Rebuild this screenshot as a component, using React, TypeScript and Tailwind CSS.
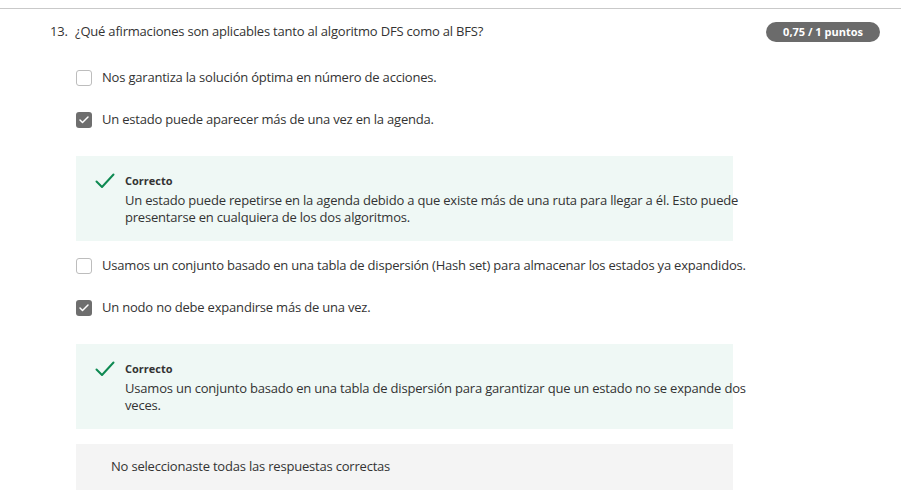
import { Check } from 'lucide-react';

type Option = {
  text: string;
  checked: boolean;
  feedback?: string;
};

const options: Option[] = [
  { text: 'Nos garantiza la solución óptima en número de acciones.', checked: false },
  {
    text: 'Un estado puede aparecer más de una vez en la agenda.',
    checked: true,
    feedback:
      'Un estado puede repetirse en la agenda debido a que existe más de una ruta para llegar a él. Esto puede presentarse en cualquiera de los dos algoritmos.',
  },
  {
    text: 'Usamos un conjunto basado en una tabla de dispersión (Hash set) para almacenar los estados ya expandidos.',
    checked: false,
  },
  {
    text: 'Un nodo no debe expandirse más de una vez.',
    checked: true,
    feedback:
      'Usamos un conjunto basado en una tabla de dispersión para garantizar que un estado no se expande dos veces.',
  },
];

function Checkbox({ checked }: { checked: boolean }) {
  if (checked) {
    return (
      <span className="flex h-4 w-4 shrink-0 items-center justify-center rounded-[3px] bg-[#6e6e6e]">
        <Check className="h-3 w-3 text-white" strokeWidth={3} />
      </span>
    );
  }
  return <span className="h-4 w-4 shrink-0 rounded-[3px] border border-[#bdbdbd] bg-white" />;
}

function Feedback({ text }: { text: string }) {
  return (
    <div className="mt-[15px] mb-[4px] flex h-[85px] w-[657px] gap-[10px] bg-[#eff8f5] pt-[17px] pl-[19px]">
      <svg viewBox="0 0 20 16" className="h-[16px] w-[20px] shrink-0" fill="none">
        <path d="M1.5 8.5 L7 14 L18.5 1.5" stroke="#0e8a52" strokeWidth="2" strokeLinecap="round" strokeLinejoin="round" />
      </svg>
      <div className="w-[622px] shrink-0">
        <div className="text-[11px] leading-[16px] font-bold text-[#333]">Correcto</div>
        <p className="mt-[3px] text-[13px] leading-[17px] tracking-[-0.2px] text-[#333]">{text}</p>
      </div>
    </div>
  );
}

export default function App() {
  return (
    <div className="min-h-[490px] bg-white font-['Open_Sans',sans-serif] text-[#333]">
      <div className="h-[9px] border-b border-[#c9c9c9]" />
      <div className="pr-[21px] pl-[50px]">
        <div className="flex h-[46px] items-center justify-between">
          <div className="flex text-[13px] tracking-[-0.2px]">
            <span className="w-[25px]">13.</span>
            <span>¿Qué afirmaciones son aplicables tanto al algoritmo DFS como al BFS?</span>
          </div>
          <span className="rounded-full bg-[#6b6b6b] px-[17px] py-[2px] text-[11px] leading-[16px] font-bold text-white">
            0,75 / 1 puntos
          </span>
        </div>

        <div className="mt-[2px] pl-[26px]">
          {options.map((option) => (
            <div key={option.text}>
              <div className="flex h-[42px] items-center gap-[10px] text-[13px] tracking-[-0.2px]">
                <Checkbox checked={option.checked} />
                <span>{option.text}</span>
              </div>
              {option.feedback && <Feedback text={option.feedback} />}
            </div>
          ))}

          <div className="mt-[15px] flex h-[46px] w-[657px] items-center bg-[#f4f4f4] pl-[35px] text-[13px] tracking-[-0.2px]">
            No seleccionaste todas las respuestas correctas
          </div>
        </div>
      </div>
    </div>
  );
}
